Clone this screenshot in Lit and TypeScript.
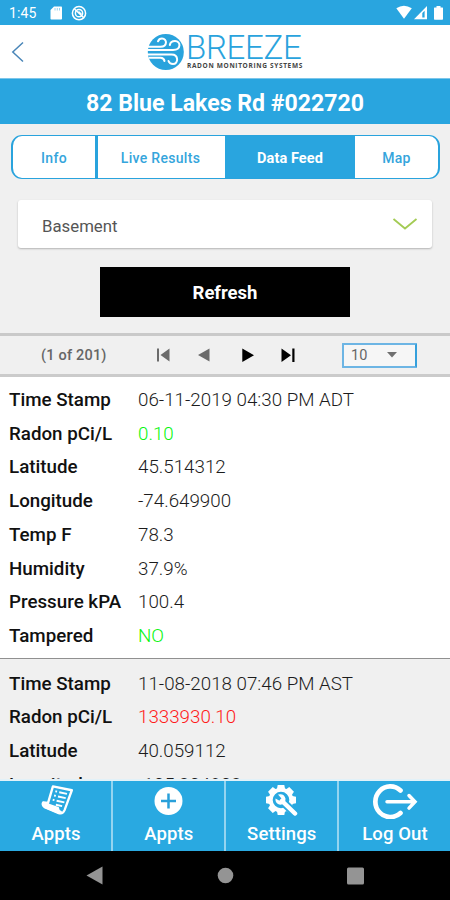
import { LitElement, html, css, svg } from "lit";
import { customElement } from "lit/decorators.js";

interface Field {
  label: string;
  value: string;
  tone?: string;
}

const RECORDS: Field[][] = [
  [
    { label: "Time Stamp", value: "06-11-2019 04:30 PM ADT" },
    { label: "Radon pCi/L", value: "0.10", tone: "good" },
    { label: "Latitude", value: "45.514312" },
    { label: "Longitude", value: "-74.649900" },
    { label: "Temp F", value: "78.3" },
    { label: "Humidity", value: "37.9%" },
    { label: "Pressure kPA", value: "100.4" },
    { label: "Tampered", value: "NO", tone: "good" },
  ],
  [
    { label: "Time Stamp", value: "11-08-2018 07:46 PM AST" },
    { label: "Radon pCi/L", value: "1333930.10", tone: "bad" },
    { label: "Latitude", value: "40.059112" },
    { label: "Longitude", value: "-105.204903" },
  ],
];

@customElement("status-bar")
export class StatusBar extends LitElement {
  static styles = css`
    :host { display: flex; align-items: center; height: 25px; background: #29a5df; color: #fff; padding: 0 7px 0 9px; box-sizing: border-box; font: 400 14px Roboto, sans-serif; }
    .time { width: 41px; letter-spacing: 0.15px; padding-top: 1px; }
    .right { margin-left: auto; }
    svg { display: block; }
  `;
  render() {
    return html`
      <span class="time">1:45</span>
      <svg width="38" height="25" fill="#fff">
        <path d="M4 6.500h7.200q.8 0 .8.800v11.400q0 .8-.8.8H1.300q-.8 0-.8-.8V10z" />
        <path d="M5 8v2.500M7.300 8v2.500M9.500 8v2.500" stroke="#8fd0ee" stroke-width=".9" />
        <circle cx="29" cy="13.200" r="6.600" fill="none" stroke="#fff" stroke-width="1.500" />
        <circle cx="29" cy="13.200" r="3.600" fill="none" stroke="#fff" stroke-width="1.500" />
        <path d="M24.500 9l9 8.500M28.500 11.500l3 3" stroke="#fff" stroke-width="1.500" />
      </svg>
      <svg class="right" width="47" height="25" fill="#fff">
        <path d="M.3 8.300Q7.800 3 15.800 8.300L8 18.800z" />
        <path d="M18 19.300L31 6v13.300z" />
        <path d="M26.300 17.500v-4.500l2.300-2.300v6.800z" fill="#29a5df" />
        <path d="M38.500 7.500h2V6h4v1.500h2q.5 0 .5.5v11q0 .7-.7.7h-7.600q-.7 0-.7-.7V8q0-.5.5-.5z" />
      </svg>`;
  }
}

@customElement("brand-header")
export class BrandHeader extends LitElement {
  static styles = css`
    :host { display: grid; grid-template-columns: 147px 41px 1fr; height: 54px; background: #fff; border-bottom: 1px solid #7cc6ea; box-sizing: border-box; font-family: Roboto, sans-serif; }
    svg { display: block; }
    .words { display: flex; flex-direction: column; padding-top: 8px; margin-left: -2px; white-space: nowrap; }
    .name { font-size: 33px; line-height: 29px; font-weight: 300; color: #29a3dd; letter-spacing: -0.3px; }
    .tag { font: 700 6.500px/7px "Open Sans", sans-serif; color: #444; letter-spacing: 0.67px; padding-left: 1px; }
  `;
  render() {
    return html`
      <svg width="147" height="53"><path d="M23 17.500L12.800 27 23 36.500" fill="none" stroke="#4a86b8" stroke-width="1.500" /></svg>
      <svg width="41" height="53" fill="none" stroke="#fff" stroke-width="2" stroke-linecap="round">
        <circle cx="18.800" cy="27" r="18" fill="#29a3dd" stroke="none" />
        <path d="M1 21.800H13.500C20.500 21.800 20.500 13.500 15 13.500Q12 13.500 11 16.300" />
        <path d="M1 25H26C34.500 25 34 16 28 16Q23.500 16 22.800 20" />
        <path d="M1 29.500H24.500C32 29.500 31.500 39 26 39Q22.500 39 21.500 36" />
        <path d="M2.500 32.800H13.500Q17 33 17.500 36" />
      </svg>
      <div class="words"><span class="name">BREEZE</span><span class="tag">RADON MONITORING SYSTEMS</span></div>`;
  }
}

@customElement("view-tabs")
export class ViewTabs extends LitElement {
  static styles = css`
    :host { display: grid; grid-template-columns: 85px 127px 130px 1fr; height: 44px; margin: 11px 10px 0 11px; box-sizing: border-box; border: 1.500px solid #29a3dd; border-left-width: 2px; border-right-width: 2px; border-radius: 11px; background: #fff; overflow: hidden; font: 500 14px Roboto, sans-serif; color: #35a5dc; }
    .tab { display: flex; align-items: center; justify-content: center; box-sizing: border-box; letter-spacing: 0.3px; padding-top: 1px; }
    .first { border-right: 3px solid #29a3dd; }
    .results { padding-right: 2px; }
    .active { background: #29a5df; color: #fff; font-weight: 700; font-size: 14.500px; letter-spacing: 0.1px; padding-top: 2px; }
  `;
  render() {
    return html`<div class="tab first">Info</div><div class="tab results">Live Results</div><div class="tab active">Data Feed</div><div class="tab">Map</div>`;
  }
}

@customElement("feed-pager")
export class FeedPager extends LitElement {
  static styles = css`
    :host { display: grid; grid-template-columns: 151px 191px 75px; align-items: center; height: 44px; margin-top: 16px; border-top: 3px solid #c9c9c9; border-bottom: 3px solid #cbcbcb; box-sizing: border-box; background: #f0f0f0; font: 500 14.500px Roboto, sans-serif; color: #666; }
    .count { padding-left: 41px; letter-spacing: 0.2px; padding-top: 1px; }
    svg { display: block; }
    .size { display: flex; align-items: center; height: 25px; border: 2px solid #6db5e4; border-right-color: #35a0dc; background: #f6f6f6; box-sizing: border-box; padding-left: 7px; gap: 20px; font-weight: 400; font-size: 14.500px; border-radius: 1px; }
  `;
  render() {
    return html`
      <span class="count">(1 of 201)</span>
      <svg width="191" height="38" fill="#6b6b6b">
        <path d="M6 12.500h2v13H6zM18.500 12.500v13L9.500 19zM58.500 12.500v13L47 19z" />
        <path d="M91.300 12.500v13.500l11.700-6.800zM130.500 12.500v13.500l9.500-6.800zM141.300 12.500h2.200v13.500h-2.200z" fill="#000" />
      </svg>
      <div class="size"><span>10</span><svg width="10" height="6"><path d="M0 0h10L5 5.500z" fill="#707070" /></svg></div>`;
  }
}

@customElement("feed-record")
export class FeedRecord extends LitElement {
  static properties = { fields: { attribute: false } };
  declare fields: Field[];
  static styles = css`
    :host { display: grid; grid-auto-rows: 33.750px; font: 400 18.750px Roboto, sans-serif; color: #111; padding: 6.100px 0 5.400px; }
    .row { display: grid; grid-template-columns: 129px 1fr; padding-left: 9px; align-items: center; white-space: nowrap; }
    .label { font-weight: 500; }
    .value { font-weight: 300; color: #1c1c1c; }
    .good { color: #08f50f; }
    .bad { color: #ff1a1a; }
  `;
  render() {
    return this.fields.map(
      (f) => html`<div class="row"><span class="label">${f.label}</span><span class="value ${f.tone ?? ""}">${f.value}</span></div>`
    );
  }
}

const teeth = [0, 45, 90, 135, 180, 225, 270, 315];

const ICONS = {
  list: svg`
    <g transform="translate(1.800 -.5) scale(.97)">
      <path d="M12.500 4L32 8 24.500 28.500Q22.500 33 18.500 31.500L4 25.500Q1 23.500 2.500 20.500L7.500 21z" fill="#29a9e1" stroke="#fff" stroke-width="2.400" stroke-linejoin="round" />
      <path d="M2.500 20.500L18 26Q18.300 29.500 21 30L18.500 31.500 4 25.500Q1 23.500 2.500 20.500z" fill="#fff" stroke="#fff" stroke-width="1.500" stroke-linejoin="round" />
      <path d="M15 9l1.800.400M19 10l8 1.700M13.700 13.400l1.800.400M17.700 14.400l8 1.700M12.300 17.800l1.800.400M16.300 18.800l8 1.700M15.500 23l6.500 1.400" stroke="#fff" stroke-width="2" />
    </g>`,
  add: svg`
    <circle cx="17.500" cy="18" r="14" fill="#fff" />
    <path d="M17.500 10.500v15M10 18h15" stroke="#29a0da" stroke-width="2.500" />`,
  gear: svg`
    <g transform="translate(17 17)">
      ${teeth.map((a) => svg`<path d="M-3.300-15h6.600l1 5h-8.600z" fill="#fff" transform=${`rotate(${a})`} />`)}
      <circle r="10.300" fill="none" stroke="#fff" stroke-width="4" />
    </g>
    <path d="M18.500 18.500L30.500 30" stroke="#29a9e1" stroke-width="8" />
    <path d="M18 18L31 30.500" stroke="#fff" stroke-width="4.500" stroke-linecap="round" />
    <path d="M14 11.500q6-1.500 7.500 4 .3 3-1.500 5-3 2-6 .5-3-2-2.500-5.500l4 2.300 2-2.300z" fill="#fff" />`,
  exit: svg`
    <path d="M28.500 7.500A15 15.300 0 1 0 28.500 30" fill="none" stroke="#fff" stroke-width="4.700" stroke-linecap="round" />
    <path d="M15 18.800h26M37 12.500l6 6.300-6 6.300" fill="none" stroke="#fff" stroke-width="3.500" stroke-linecap="round" />`,
};

@customElement("bottom-nav")
export class BottomNav extends LitElement {
  static styles = css`
    :host { display: grid; grid-template-columns: 113px 112.500px 113.500px 1fr; height: 72px; box-sizing: border-box; border-top: 2px solid #e2f1f8; background: #29a9e1; color: #fff; font: 500 18.500px Roboto, sans-serif; }
    .item { display: flex; flex-direction: column; align-items: center; box-sizing: border-box; border-right: 2px solid #94d4f0; white-space: nowrap; }
    .item:last-child { border-right: none; }
    svg { display: block; margin-top: 2px; }
    .caption { line-height: 22px; margin-top: 4px; padding-left: 1px; letter-spacing: 0.1px; }
  `;
  render() {
    return html`
      <div class="item"><svg width="34" height="36">${ICONS.list}</svg><span class="caption">Appts</span></div>
      <div class="item"><svg width="34" height="36">${ICONS.add}</svg><span class="caption">Appts</span></div>
      <div class="item"><svg width="34" height="36">${ICONS.gear}</svg><span class="caption">Settings</span></div>
      <div class="item"><svg width="46" height="36">${ICONS.exit}</svg><span class="caption">Log Out</span></div>`;
  }
}

@customElement("app-root")
export class AppRoot extends LitElement {
  static styles = css`
    :host { display: flex; flex-direction: column; width: 450px; height: 900px; overflow: hidden; background: #f0f0f0; font-family: Roboto, sans-serif; }
    :host > * { flex-shrink: 0; }
    .title { height: 45px; background: #29a5df; color: #fff; display: flex; align-items: center; justify-content: center; font-weight: 700; font-size: 23.100px; box-sizing: border-box; padding-top: 3px; }
    .select { display: flex; align-items: center; justify-content: space-between; height: 48px; margin: 21px 18px 0; padding: 3px 14px 0 24px; box-sizing: border-box; background: #fff; border-radius: 3px; box-shadow: 0 1px 2px rgba(0, 0, 0, 0.25); color: #555; font-size: 16.800px; }
    .select svg { margin-top: -3px; }
    .refresh { width: 250px; height: 50px; margin: 19px auto 0; background: #000; color: #fff; display: flex; align-items: center; justify-content: center; font-weight: 700; font-size: 18.500px; box-sizing: border-box; padding-top: 1px; }
    .feed { flex: 1 1 0; min-height: 0; overflow: hidden; }
    .record { background: #fff; }
    .record.alt { background: #f0f0f0; border-top: 1.500px solid #909090; padding-top: 7.300px; }
    .sys { height: 49px; background: #000; }
    svg { display: block; }
  `;
  render() {
    return html`
      <status-bar></status-bar>
      <brand-header></brand-header>
      <div class="title">82 Blue Lakes Rd #022720</div>
      <view-tabs></view-tabs>
      <div class="select"><span>Basement</span><svg width="26" height="14"><path d="M1.500 2L13 11.500 24.500 2" fill="none" stroke="#a3cb54" stroke-width="1.800" /></svg></div>
      <div class="refresh">Refresh</div>
      <feed-pager></feed-pager>
      <div class="feed">
        ${RECORDS.map((r, i) => html`<feed-record class="record ${i % 2 ? "alt" : ""}" .fields=${r}></feed-record>`)}
      </div>
      <bottom-nav></bottom-nav>
      <div class="sys">
        <svg width="450" height="49" fill="#949494"><path d="M86.500 24.500L102.500 15.500v18z" /><circle cx="225.500" cy="24.500" r="7.800" /><rect x="347" y="16.500" width="17" height="17" rx="1.500" /></svg>
      </div>`;
  }
}
